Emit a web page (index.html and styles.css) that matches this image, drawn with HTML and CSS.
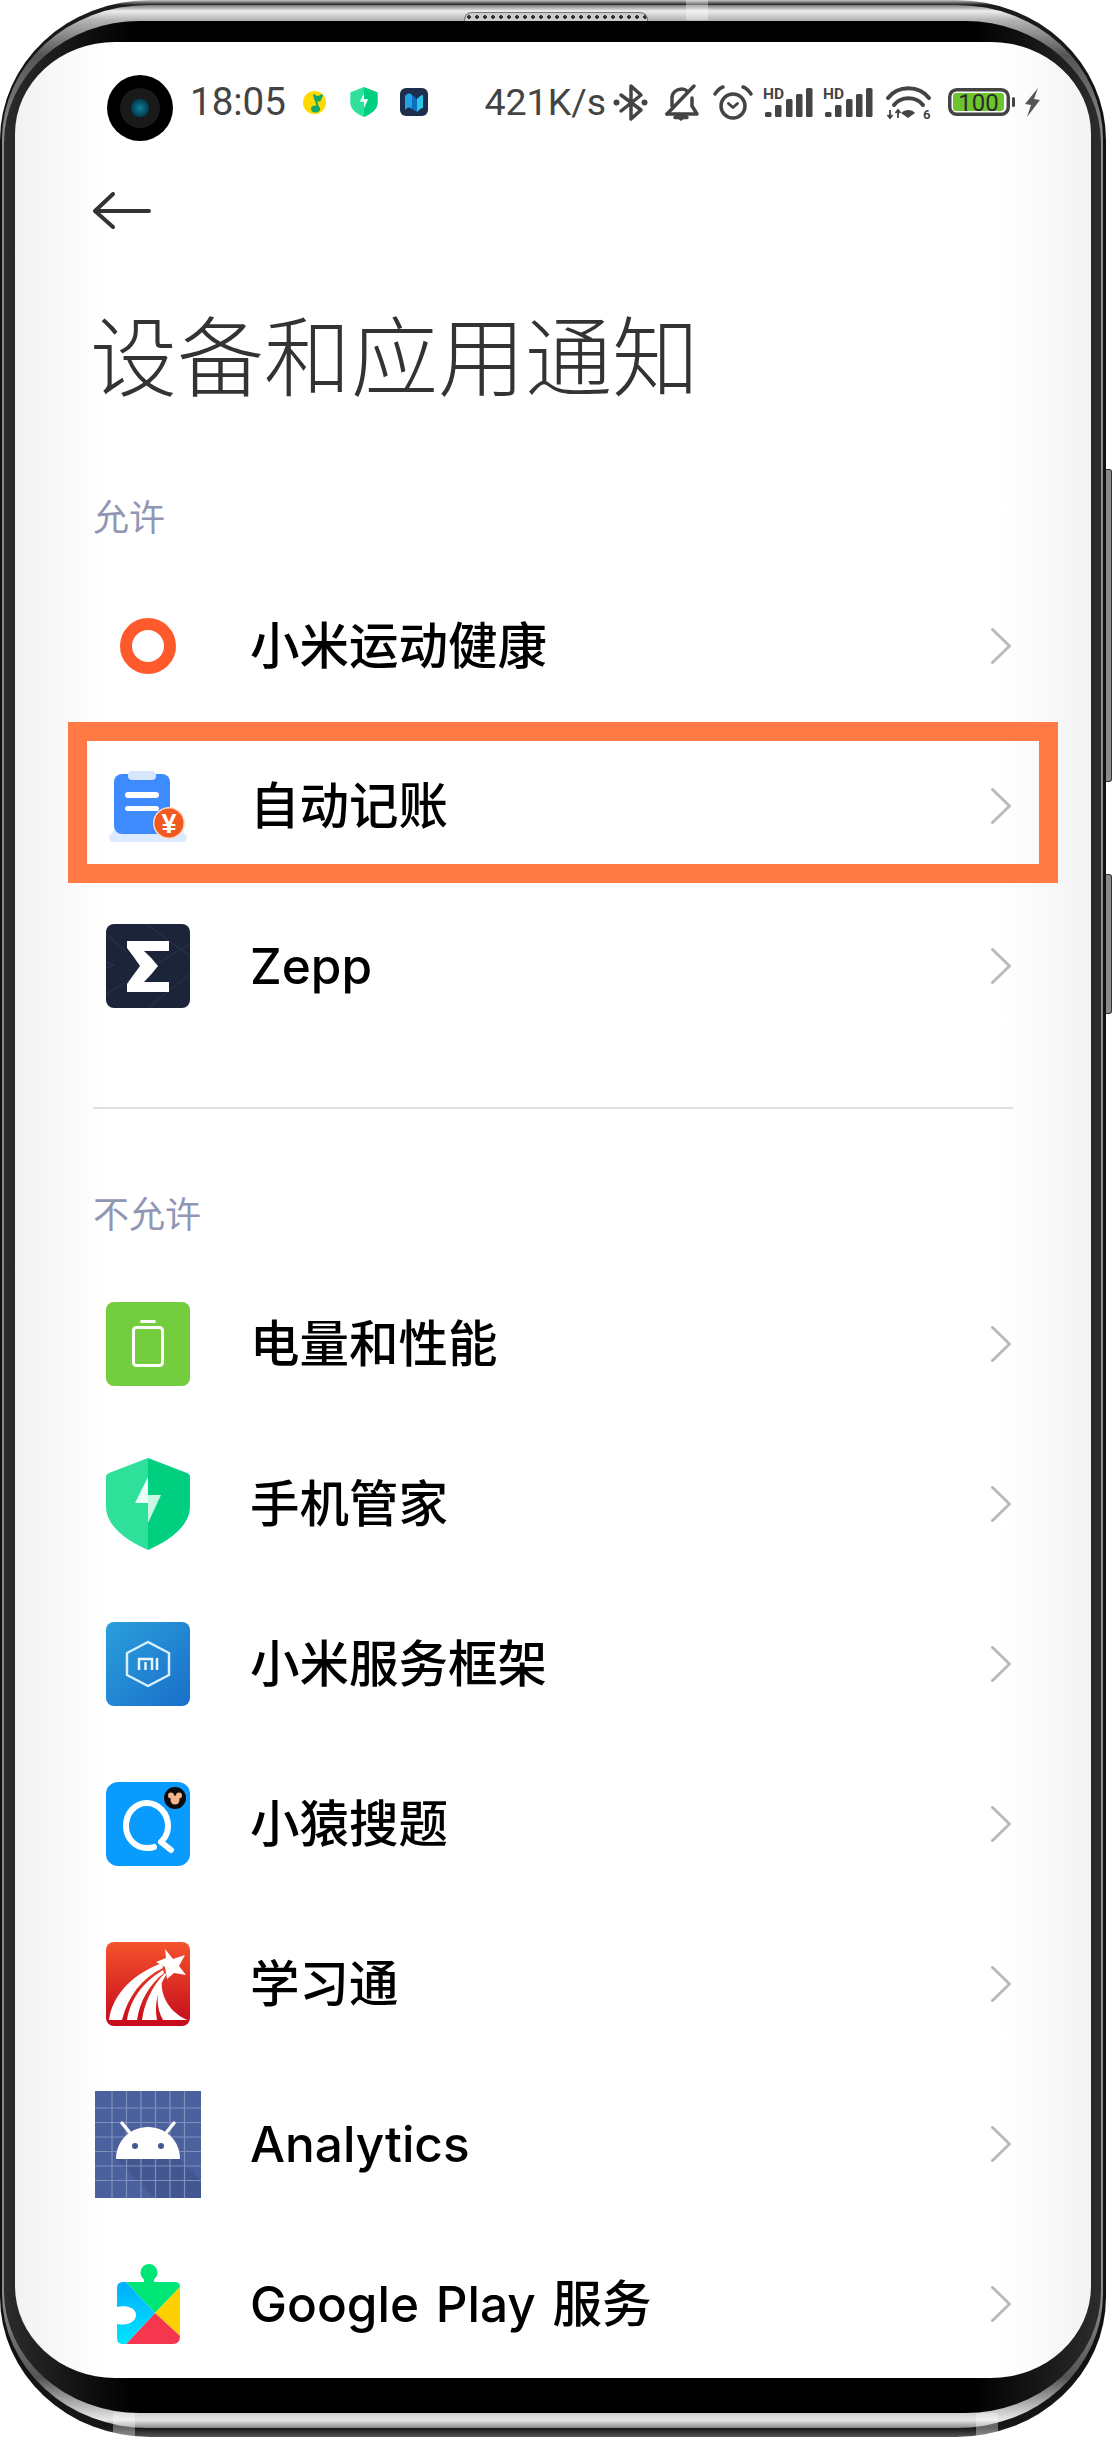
FILE: index.html
```html
<!DOCTYPE html>
<html>
<head>
    <meta charset="utf-8" />
    <title>设备和应用通知</title>
    <link rel="stylesheet" href="styles.css">
</head>
<body>
    <div class="phone">
        <div class="side-btn side-btn-top"></div>
        <div class="side-btn side-btn-low"></div>
        <div class="antenna antenna-top"></div>
        <div class="antenna antenna-bl"></div>
        <div class="antenna antenna-br"></div>
        <div class="speaker"></div>

        <div class="rim">
            <div class="bezel">
                <div class="screen">

                    <div class="status">
                        <div class="camera"><div class="lens"></div></div>
                        <div class="status-left">
                            <span class="time">18:05</span>
                            <svg class="st-qq" viewBox="0 0 23 23"><circle cx="11.5" cy="11.5" r="11.5" fill="#ffd900"/><path d="M11 4 L16 19 M11 4 C13 7 17 6 19 4 L17 9 C15 10 13 9 12 8" fill="#12a86a" stroke="#12a86a" stroke-width="2" stroke-linecap="round"/><ellipse cx="12.5" cy="18" rx="4.5" ry="3.4" fill="#12a86a"/></svg>
                            <svg class="st-shield" viewBox="0 0 84 92"><path d="M42 0 V92 C24 84 0 70 0 48 V19 Q0 16 3 15 Z" fill="#2fe09b"/><path d="M42 0 L81 15 Q84 16 84 19 V48 C84 70 60 84 42 92 Z" fill="#00cf7f"/><path d="M42 19 L29 45 H42 V65 L55 37 H42 Z" fill="#eafff7"/></svg>
                            <svg class="st-map" viewBox="0 0 28 28"><rect width="28" height="28" rx="6" fill="#1d2f4c"/><path d="M5 8 C8 5 10 5 12 7 V21 C10 19 8 19 5 22 Z" fill="#1fa2e6"/><path d="M12 7 L17 11 V24 L12 21 Z" fill="#0b6fc0"/><path d="M17 11 C19 9 21 7 23 7 V20 C21 20 19 22 17 24 Z" fill="#29c5e8"/></svg>
                        </div>
                        <div class="status-right">
                            <span class="speed">421K/s</span>
                            <svg class="st-bt" viewBox="0 0 35 39"><path d="M8 12 L28 27 L18 36 V3 L28 12 L8 28" fill="none" stroke="#444" stroke-width="3.5" stroke-linejoin="round" stroke-linecap="round"/><circle cx="3.5" cy="19.5" r="3" fill="#444"/><circle cx="31.5" cy="19.5" r="3" fill="#444"/></svg>
                            <svg class="st-bell" viewBox="0 0 33 37"><path d="M7 22 V14 C7 8 12 5 17 5 C19 5 21 6 22 7 M27 14 V22 L32 30 H2 M10 33.5 H22" fill="none" stroke="#444" stroke-width="3.5" stroke-linecap="round" stroke-linejoin="round"/><path d="M2 30 L29 2" stroke="#444" stroke-width="3.5" stroke-linecap="round"/><path d="M12 34 H20 L16 37 Z" fill="#444"/></svg>
                            <svg class="st-alarm" viewBox="0 0 40 35"><circle cx="20" cy="21" r="12" fill="none" stroke="#444" stroke-width="3.5"/><path d="M2 9 C4 6 7 3 10 2 M38 9 C36 6 33 3 30 2" fill="none" stroke="#444" stroke-width="3.5" stroke-linecap="round"/><path d="M15.5 18.5 L20 22.5 L24.5 18.5" fill="none" stroke="#444" stroke-width="3" stroke-linecap="round" stroke-linejoin="round"/></svg>
                            <svg class="st-signal" viewBox="0 0 50 30"><text x="0" y="11.5" class="hd-text">HD</text><rect x="2" y="25" width="6.5" height="5" rx="1.5" fill="#444"/><rect x="12" y="18" width="6.5" height="12" rx="1.5" fill="#444"/><rect x="23" y="12" width="6.5" height="18" rx="1.5" fill="#444"/><rect x="33" y="7" width="6.5" height="23" rx="1.5" fill="#444"/><rect x="43" y="1" width="6.5" height="29" rx="1.5" fill="#444"/></svg>
                            <svg class="st-signal" viewBox="0 0 50 30"><text x="0" y="11.5" class="hd-text">HD</text><rect x="2" y="25" width="6.5" height="5" rx="1.5" fill="#444"/><rect x="12" y="18" width="6.5" height="12" rx="1.5" fill="#444"/><rect x="23" y="12" width="6.5" height="18" rx="1.5" fill="#444"/><rect x="33" y="7" width="6.5" height="23" rx="1.5" fill="#444"/><rect x="43" y="1" width="6.5" height="29" rx="1.5" fill="#444"/></svg>
                            <svg class="st-wifi" viewBox="0 0 46 33"><path d="M2 12 C12 -1 33 -1 43 12 M8 19 C15 10 30 10 37 19" fill="none" stroke="#444" stroke-width="4" stroke-linecap="round"/><path d="M15 27 C19 23 26 23 29 27 L22 32 Z" fill="#444"/><path d="M4 24 V32 M1.5 29 L4 32 L6.5 29 M12 32 V24 M9.5 27 L12 24 L14.5 27" fill="none" stroke="#444" stroke-width="1.8"/><text x="37" y="33" class="wifi-text">6</text></svg>
                            <svg class="st-battery" viewBox="0 0 67 28"><rect x="1.75" y="1.75" width="58.5" height="24.5" rx="7" fill="none" stroke="#444" stroke-width="3.5"/><rect x="5" y="5" width="51" height="18" rx="3" fill="#6cc52d"/><text x="30.5" y="22.5" class="batt-text">100</text><rect x="64" y="9" width="3" height="10" rx="1.5" fill="#444"/></svg>
                            <svg class="st-bolt" viewBox="0 0 17 29"><path d="M14 0 L1 16 L7 17 L3 29 L16 12 L10 11 Z" fill="#555"/></svg>
                        </div>
                    </div>

                    <svg class="back-arrow" viewBox="0 0 58 37"><path d="M56 19 H3 M20 2 L2 19 L20 35" fill="none" stroke="#333" stroke-width="4" stroke-linecap="round" stroke-linejoin="round"/></svg>

                    <h1 class="page-title">设备和应用通知</h1>

                    <div class="section-label label-allow">允许</div>

                    <div class="row">
                        <div class="row-icon">
                            <svg width="56" height="56" viewBox="0 0 56 56"><circle cx="28" cy="28" r="22" fill="none" stroke="#ff5a2c" stroke-width="12"/></svg>
                        </div>
                        <span class="row-name">小米运动健康</span>
                        <svg class="chevron" viewBox="0 0 20 36"><path d="M1.5 1.5 L18.5 18 L1.5 34.5" fill="none" stroke="#bbb" stroke-width="3" stroke-linecap="round" stroke-linejoin="round"/></svg>
                    </div>

                    <div class="row row-marked">
                        <div class="marker"></div>
                        <div class="row-icon">
                            <svg width="78" height="71" viewBox="0 0 78 71"><path d="M6 58 H72 L78 66 Q78 71 73 71 H5 Q0 71 0 66 Z" fill="#dceaff"/><rect x="5" y="3" width="56" height="60" rx="8" fill="#3d8bff"/><rect x="19" y="0" width="28" height="9" rx="4" fill="#d8e6fb"/><rect x="16" y="21" width="34" height="6" rx="3" fill="#fff"/><rect x="16" y="35" width="34" height="5" rx="2.5" fill="#fff"/><circle cx="60" cy="52" r="16" fill="#ffd9c4"/><circle cx="60" cy="52" r="14.5" fill="#f05a1e"/><text x="60" y="62" class="yen-text">¥</text></svg>
                        </div>
                        <span class="row-name">自动记账</span>
                        <svg class="chevron" viewBox="0 0 20 36"><path d="M1.5 1.5 L18.5 18 L1.5 34.5" fill="none" stroke="#bbb" stroke-width="3" stroke-linecap="round" stroke-linejoin="round"/></svg>
                    </div>

                    <div class="row">
                        <div class="row-icon">
                            <svg width="84" height="84" viewBox="0 0 84 84"><rect width="84" height="84" rx="8" fill="#1c2439"/><path d="M40 0 L84 32 M0 10 L20 28 M0 70 L84 20 M0 44 L8 41 L0 38 M42 84 L84 50" fill="none" stroke="#2c3550" stroke-width="1"/><path d="M21 17 H63 V27 H38 Q46 34 52 42 Q46 50 38 58 H63 V68 H21 V60 Q28 50 34 42 Q28 33 21 24 Z" fill="#fff"/></svg>
                        </div>
                        <span class="row-name">Zepp</span>
                        <svg class="chevron" viewBox="0 0 20 36"><path d="M1.5 1.5 L18.5 18 L1.5 34.5" fill="none" stroke="#bbb" stroke-width="3" stroke-linecap="round" stroke-linejoin="round"/></svg>
                    </div>

                    <div class="divider"></div>

                    <div class="section-label label-deny">不允许</div>

                    <div class="row">
                        <div class="row-icon">
                            <svg width="84" height="84" viewBox="0 0 84 84"><rect width="84" height="84" rx="8" fill="#74cc3f"/><rect x="27.5" y="25.5" width="29" height="38" rx="3" fill="none" stroke="#fff" stroke-width="3"/><rect x="34" y="18" width="16" height="3" rx="1.5" fill="#fff"/></svg>
                        </div>
                        <span class="row-name">电量和性能</span>
                        <svg class="chevron" viewBox="0 0 20 36"><path d="M1.5 1.5 L18.5 18 L1.5 34.5" fill="none" stroke="#bbb" stroke-width="3" stroke-linecap="round" stroke-linejoin="round"/></svg>
                    </div>

                    <div class="row">
                        <div class="row-icon">
                            <svg width="84" height="92" viewBox="0 0 84 92"><path d="M42 0 V92 C24 84 0 70 0 48 V19 Q0 16 3 15 Z" fill="#2fe09b"/><path d="M42 0 L81 15 Q84 16 84 19 V48 C84 70 60 84 42 92 Z" fill="#00cf7f"/><path d="M42 19 L29 45 H42 Z" fill="#eafff7"/><path d="M42 37 H55 L42 65 Z" fill="#c9f7e6"/></svg>
                        </div>
                        <span class="row-name">手机管家</span>
                        <svg class="chevron" viewBox="0 0 20 36"><path d="M1.5 1.5 L18.5 18 L1.5 34.5" fill="none" stroke="#bbb" stroke-width="3" stroke-linecap="round" stroke-linejoin="round"/></svg>
                    </div>

                    <div class="row">
                        <div class="row-icon">
                            <svg width="84" height="84" viewBox="0 0 84 84"><defs><linearGradient id="miBg" x1="0" y1="0" x2="1" y2="1"><stop offset="0" stop-color="#2a9fdc"/><stop offset="1" stop-color="#1a6fc9"/></linearGradient></defs><rect width="84" height="84" rx="8" fill="url(#miBg)"/><path d="M42 20 L63 31 V53 L42 64 L21 53 V31 Z" fill="none" stroke="#d8f0ff" stroke-width="2.5" stroke-linejoin="round"/><path d="M33 48 V37 H46 V48 M39.5 40 V48 M51 36 V48" fill="none" stroke="#e6f6ff" stroke-width="2.5"/></svg>
                        </div>
                        <span class="row-name">小米服务框架</span>
                        <svg class="chevron" viewBox="0 0 20 36"><path d="M1.5 1.5 L18.5 18 L1.5 34.5" fill="none" stroke="#bbb" stroke-width="3" stroke-linecap="round" stroke-linejoin="round"/></svg>
                    </div>

                    <div class="row">
                        <div class="row-icon">
                            <svg width="84" height="84" viewBox="0 0 84 84"><rect width="84" height="84" rx="12" fill="#0a9bff"/><path d="M48 65 C46 66 43 66 41 66 C29 66 20 56 20 44 C20 31 29 21 41 21 C52 21 62 31 62 44 C62 50 60 55 56 59" fill="none" stroke="#fff" stroke-width="6" stroke-linecap="round"/><path d="M55 60 L65 68" stroke="#fff" stroke-width="6" stroke-linecap="round"/><circle cx="69" cy="16" r="11" fill="#0c0c0c"/><circle cx="69" cy="18" r="4.5" fill="#f7b48a"/><circle cx="65" cy="13.5" r="3" fill="#f7b48a"/><circle cx="73" cy="13.5" r="3" fill="#f7b48a"/></svg>
                        </div>
                        <span class="row-name">小猿搜题</span>
                        <svg class="chevron" viewBox="0 0 20 36"><path d="M1.5 1.5 L18.5 18 L1.5 34.5" fill="none" stroke="#bbb" stroke-width="3" stroke-linecap="round" stroke-linejoin="round"/></svg>
                    </div>

                    <div class="row">
                        <div class="row-icon">
                            <svg width="84" height="84" viewBox="0 0 84 84"><defs><linearGradient id="redBg" x1="0" y1="0" x2="0" y2="1"><stop offset="0" stop-color="#f4532c"/><stop offset="1" stop-color="#c50a1c"/></linearGradient></defs><rect width="84" height="84" rx="8" fill="url(#redBg)"/><path d="M3 78 C6 56 22 34 56 21 L57 26 C36 36 22 54 16 78 Z M21 78 C24 60 34 42 57 28 L58 31 C44 42 34 58 31 78 Z M36 78 C38 62 46 44 59 31 L60 33 C52 46 48 62 51 78 Z M56 36 C54 50 60 68 81 78 H57 C50 66 50 50 56 36 Z" fill="#fff"/><path d="M59 7 L67 17 L79 13 L73 24 L80 33 L68 31 L61 37 L59 25 L50 20 L60 16 Z" fill="#fff"/></svg>
                        </div>
                        <span class="row-name">学习通</span>
                        <svg class="chevron" viewBox="0 0 20 36"><path d="M1.5 1.5 L18.5 18 L1.5 34.5" fill="none" stroke="#bbb" stroke-width="3" stroke-linecap="round" stroke-linejoin="round"/></svg>
                    </div>

                    <div class="row">
                        <div class="row-icon">
                            <svg width="106" height="107" viewBox="0 0 106 107"><rect width="106" height="107" fill="#4a619e"/><path d="M21 68 H85 L106 89 V107 H60 Z" fill="#42568f"/><path d="M17 0 V107 M31.5 0 V107 M46 0 V107 M60.5 0 V107 M75 0 V107 M89.5 0 V107 M0 17 H106 M0 31.5 H106 M0 46 H106 M0 60.5 H106 M0 75 H106 M0 89.5 H106" stroke="#7f90bd" stroke-width="1.2"/><path d="M27 32 L35 42 M79 32 L71 42" stroke="#fff" stroke-width="3.5" stroke-linecap="round"/><path d="M21 68 C21 50 35 36 53 36 C71 36 85 50 85 68 Z" fill="#fff"/><circle cx="40" cy="55" r="3" fill="#42598f"/><circle cx="66" cy="55" r="3" fill="#42598f"/></svg>
                        </div>
                        <span class="row-name">Analytics</span>
                        <svg class="chevron" viewBox="0 0 20 36"><path d="M1.5 1.5 L18.5 18 L1.5 34.5" fill="none" stroke="#bbb" stroke-width="3" stroke-linecap="round" stroke-linejoin="round"/></svg>
                    </div>

                    <div class="row">
                        <div class="row-icon">
                            <svg width="63" height="80" viewBox="0 0 63 80"><defs><linearGradient id="gpBlue" x1="0" y1="0" x2="0" y2="1"><stop offset="0" stop-color="#00aeff"/><stop offset="1" stop-color="#00e5ff"/></linearGradient></defs><circle cx="32" cy="8.5" r="8.5" fill="#00e676"/><rect x="27" y="10" width="10" height="10" fill="#00e676"/><path d="M9 18 H58 Q63 18 63 23 L38 49 Z" fill="#00e676"/><path d="M63 23 V72 L38 49 Z" fill="#ffd000"/><path d="M38 49 L63 72 Q63 80 56 80 H9 Z" fill="#f5364f"/><path d="M9 18 L38 49 L9 80 H6 Q0 80 0 74 V60 C8 62 19 59 19 51 C19 43 8 41 0 43 V24 Q0 18 6 18 Z" fill="url(#gpBlue)"/></svg>
                        </div>
                        <span class="row-name">Google Play 服务</span>
                        <svg class="chevron" viewBox="0 0 20 36"><path d="M1.5 1.5 L18.5 18 L1.5 34.5" fill="none" stroke="#bbb" stroke-width="3" stroke-linecap="round" stroke-linejoin="round"/></svg>
                    </div>

                </div>
            </div>
        </div>
    </div>
</body>
</html>
```

FILE: styles.css
```css
html, body {
    margin: 0;
    padding: 0;
    background: #fff;
}

body {
    width: 1112px;
    height: 2437px;
    overflow: hidden;
    font-family: Roboto, "Noto Sans CJK SC", sans-serif;
}

/* device frame */
.phone {
    position: relative;
    width: 1106px;
    height: 2437px;
    box-sizing: border-box;
    padding: 5px 3px 9px 2px;
    border-radius: 150px / 140px;
    background: linear-gradient(to bottom, #c4c4c4 0, #1c1c1c 5px, #111 100px, #111 calc(100% - 100px), #161616 calc(100% - 9px), #555 100%);
}

.rim {
    height: 100%;
    box-sizing: border-box;
    padding: 16px 2px 15px 2px;
    border-radius: 146px / 134px;
    background: linear-gradient(to bottom, #777 0, #ededed 6px, #b4b4b4 15px, #555 50px, #8a8a8a 130px, #8a8a8a calc(100% - 130px), #555 calc(100% - 50px), #d0d0d0 calc(100% - 15px), #e8e8e8 calc(100% - 8px), #888 100%);
}

.bezel {
    height: 100%;
    box-sizing: border-box;
    padding: 21px 10px 35px 11px;
    border-radius: 136px / 122px;
    background: linear-gradient(to right, #2c2c2c, #000 130px, #000 calc(100% - 130px), #2c2c2c);
}

.screen {
    height: 2336px;
    overflow: hidden;
    border-radius: 100px / 92px;
    background: linear-gradient(to right, #f2f2f2, #fff 90px, #fff calc(100% - 90px), #f3f3f3);
}

.side-btn {
    position: absolute;
    right: -6px;
    width: 6px;
    box-sizing: border-box;
    border: 1px solid #333;
    border-left: none;
    border-radius: 0 3px 3px 0;
    background: #8a8a8a;
}

.side-btn-top {
    top: 469px;
    height: 313px;
}

.side-btn-low {
    top: 874px;
    height: 140px;
}

.antenna {
    position: absolute;
    background: rgba(255, 255, 255, 0.35);
}

.antenna-top {
    top: 0;
    left: 686px;
    width: 22px;
    height: 20px;
}

.antenna-bl {
    bottom: 0;
    left: 113px;
    width: 22px;
    height: 24px;
}

.antenna-br {
    bottom: 0;
    left: 976px;
    width: 22px;
    height: 24px;
}

.speaker {
    position: absolute;
    top: 12px;
    left: 464px;
    width: 184px;
    height: 9px;
    box-sizing: border-box;
    border: 1px solid #777;
    border-bottom: none;
    border-radius: 8px 8px 0 0;
    background: radial-gradient(circle, #333 1.6px, transparent 2px) 0 0 / 8px 8px, #ccc;
}

/* status bar */
.status {
    display: flex;
    align-items: center;
    height: 66px;
    padding: 33px 50px 0 92px;
}

.camera {
    flex: none;
    width: 66px;
    height: 66px;
    display: flex;
    align-items: center;
    justify-content: center;
    border-radius: 50%;
    background: #000;
}

.lens {
    width: 20px;
    height: 20px;
    border-radius: 50%;
    background: radial-gradient(circle, #0b7f9c 0, #064a5e 50%, #0a2029 75%, #111 100%);
    box-shadow: 0 0 0 10px #1a1a1a;
}

.status-left,
.status-right {
    display: flex;
    align-items: center;
    margin-bottom: 12px;
}

.status-left {
    margin-left: 17px;
}

.status-right {
    margin-left: auto;
}

.time,
.speed {
    line-height: 46px;
    color: #444;
}

.time {
    font-size: 38.5px;
}

.speed {
    font-size: 37.5px;
}

.status svg {
    flex: none;
    overflow: visible;
}

.st-qq {
    width: 23px;
    height: 23px;
    margin-left: 17px;
}

.st-shield {
    width: 28px;
    height: 30px;
    margin-left: 24px;
}

.st-map {
    width: 28px;
    height: 28px;
    margin-left: 22px;
}

.st-bt {
    width: 35px;
    height: 39px;
    margin-left: 7px;
}

.st-bell {
    width: 33px;
    height: 37px;
    margin-left: 17px;
}

.st-alarm {
    width: 40px;
    height: 35px;
    margin-left: 15px;
}

.st-signal {
    width: 50px;
    height: 30px;
    margin-left: 10px;
}

.st-wifi {
    width: 46px;
    height: 33px;
    margin-left: 13px;
}

.st-battery {
    width: 67px;
    height: 28px;
    margin-left: 16px;
}

.st-bolt {
    width: 17px;
    height: 29px;
    margin-left: 9px;
}

.hd-text {
    font-family: Roboto, sans-serif;
    font-size: 15.5px;
    font-weight: 700;
    fill: #444;
}

.wifi-text {
    font-family: Roboto, sans-serif;
    font-size: 13px;
    font-weight: 700;
    fill: #444;
}

.batt-text {
    font-family: Roboto, sans-serif;
    font-size: 24px;
    fill: #2a2a2a;
    text-anchor: middle;
}

.yen-text {
    font-family: "Liberation Sans", sans-serif;
    font-size: 27px;
    font-weight: 700;
    fill: #fff;
    text-anchor: middle;
}

/* header */
.back-arrow {
    display: block;
    width: 58px;
    height: 37px;
    margin: 51px 0 0 78px;
}

.page-title {
    margin: 73px 0 0 75px;
    font-family: "Noto Sans CJK SC", sans-serif;
    font-size: 87px;
    line-height: 100px;
    font-weight: 300;
    color: #333;
}

.section-label {
    margin-left: 78px;
    font-family: "Noto Sans CJK SC", sans-serif;
    font-size: 36px;
    line-height: 50px;
    color: #9096b3;
}

.label-allow {
    margin-top: 88px;
    margin-bottom: 26px;
}

.label-deny {
    margin-top: 78px;
    margin-bottom: 27px;
}

.divider {
    height: 2px;
    margin: 61px 78px 0 78px;
    background: #e0e0e0;
}

/* rows */
.row {
    position: relative;
    display: flex;
    align-items: center;
    height: 160px;
    padding: 0 80px 0 78px;
}

.row-icon {
    flex: none;
    width: 110px;
    display: flex;
    align-items: center;
    justify-content: center;
}

.row-icon svg {
    display: block;
}

.row-name {
    flex: 1;
    margin-left: 47px;
    font-family: Inter, "Noto Sans CJK SC", sans-serif;
    font-size: 49.5px;
    line-height: 60px;
    font-weight: 500;
    word-spacing: 3.5px;
    color: #000;
}

.chevron {
    flex: none;
    width: 20px;
    height: 36px;
}

/* the orange box round the second row */
.marker {
    position: absolute;
    top: -4px;
    left: 53px;
    width: 990px;
    height: 161px;
    box-sizing: border-box;
    border: 19px solid #ff7a45;
}
```
